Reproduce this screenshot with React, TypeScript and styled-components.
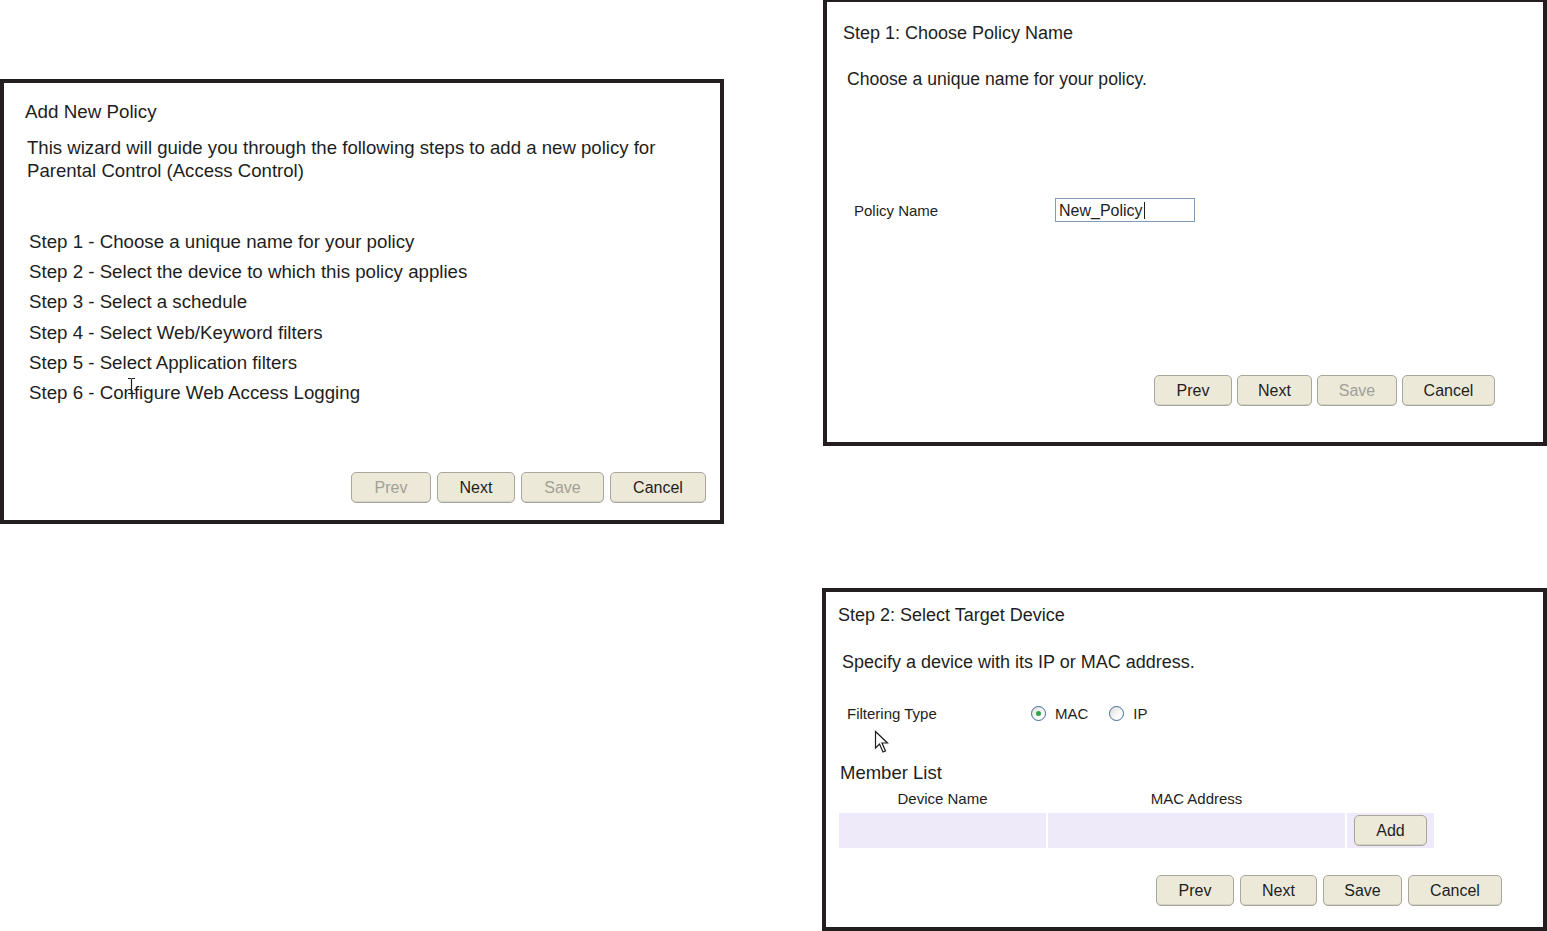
import * as React from "react";
import styled, { createGlobalStyle } from "styled-components";

const GlobalStyle = createGlobalStyle`
  html, body {
    margin: 0;
    padding: 0;
    background: #ffffff;
    overflow: hidden;
  }
  body {
    font-family: "Liberation Sans", Arial, sans-serif;
    color: #1e1e1e;
  }
`;

const Page = styled.div`
  display: grid;
  grid-template-columns: 724px 724px;
  column-gap: 99px;
  align-items: start;
  width: 1547px;
  height: 931px;
  overflow: hidden;
`;

const LeftColumn = styled.div`
  display: flex;
  flex-direction: column;
  padding-top: 79px;
`;

const RightColumn = styled.div`
  display: flex;
  flex-direction: column;
  margin-top: -2px;
`;

const Panel = styled.div<{ h: number; top?: number; shift?: number }>`
  position: relative;
  box-sizing: border-box;
  height: ${(p) => p.h}px;
  margin-top: ${(p) => p.top || 0}px;
  margin-left: ${(p) => p.shift || 0}px;
  border: 4px solid #231f20;
  background: #ffffff;
  display: flex;
  flex-direction: column;
`;

const Heading = styled.div<{ size?: number }>`
  font-size: ${(p) => p.size || 18}px;
  line-height: 22px;
  white-space: nowrap;
`;

const Text = styled.div<{ size?: number; lh?: number; indent?: number; gap?: number }>`
  font-size: ${(p) => p.size || 18}px;
  line-height: ${(p) => p.lh || 22}px;
  margin-left: ${(p) => p.indent || 0}px;
  margin-top: ${(p) => p.gap || 0}px;
  white-space: nowrap;
`;

const StepList = styled.div`
  display: flex;
  flex-direction: column;
  margin-top: 45px;
  margin-left: 4px;
`;

const StepItem = styled.div`
  font-size: 18.7px;
  line-height: 30.2px;
  white-space: nowrap;
`;

const ButtonBar = styled.div<{ gap?: number; right: number; top?: number; bottom?: number }>`
  display: flex;
  justify-content: flex-end;
  gap: ${(p) => p.gap || 5}px;
  margin-top: ${(p) => (p.top === undefined ? "auto" : `${p.top}px`)};
  padding-right: ${(p) => p.right}px;
  padding-bottom: ${(p) => p.bottom || 0}px;
`;

const WizButton = styled.button<{ w: number; off?: boolean }>`
  box-sizing: border-box;
  width: ${(p) => p.w}px;
  height: 31px;
  padding: 0;
  border: 1px solid #a8a69d;
  border-radius: 5px;
  background: #ece9d8;
  font-family: "Liberation Sans", Arial, sans-serif;
  font-size: 16px;
  color: ${(p) => (p.off ? "#a3a096" : "#1e1e1e")};
  box-shadow: inset 0 -1px 0 #d6d2c2;
`;

const FieldRow = styled.div<{ top: number; indent: number }>`
  display: flex;
  align-items: center;
  margin-top: ${(p) => p.top}px;
  margin-left: ${(p) => p.indent}px;
  height: 24px;
`;

const FieldLabel = styled.div<{ w: number }>`
  width: ${(p) => p.w}px;
  font-size: 15px;
  white-space: nowrap;
`;

const TextBox = styled.div`
  box-sizing: border-box;
  width: 140px;
  height: 24px;
  border: 1px solid #7f9db9;
  padding: 1px 0 0 3px;
  display: flex;
  align-items: center;
  font-size: 16px;
`;

const Caret = styled.span`
  display: inline-block;
  width: 1px;
  height: 17px;
  background: #1e1e1e;
  margin-left: 1px;
`;

const RadioCircle = styled.span<{ on?: boolean }>`
  position: relative;
  box-sizing: border-box;
  width: 15px;
  height: 15px;
  border-radius: 50%;
  border: 1px solid #3f6c9a;
  background: linear-gradient(135deg, #dcdcd6 0%, #ffffff 70%);
  display: inline-flex;
  align-items: center;
  justify-content: center;
  &::after {
    content: "";
    display: ${(p) => (p.on ? "block" : "none")};
    width: 5px;
    height: 5px;
    border-radius: 50%;
    background: #25a84a;
  }
`;

const RadioLabel = styled.span<{ after?: number }>`
  font-size: 15px;
  margin-left: 9px;
  margin-right: ${(p) => p.after || 0}px;
`;

const Table = styled.div`
  display: flex;
  flex-direction: column;
  margin-left: 1px;
  width: 595px;
`;

const TableRow = styled.div<{ h: number; top: number }>`
  display: grid;
  grid-template-columns: 207px 297px 87px;
  column-gap: 2px;
  height: ${(p) => p.h}px;
  margin-top: ${(p) => p.top}px;
`;

const Cell = styled.div<{ tint?: boolean }>`
  display: flex;
  align-items: center;
  justify-content: center;
  background: ${(p) => (p.tint ? "#efeaf9" : "transparent")};
  font-size: 15px;
  white-space: nowrap;
`;

const Overlay = styled.div<{ x: number; y: number }>`
  position: absolute;
  left: ${(p) => p.x}px;
  top: ${(p) => p.y}px;
  line-height: 0;
  pointer-events: none;
`;

const Content1 = styled.div`
  display: flex;
  flex-direction: column;
  padding: 18px 0 0 21px;
`;

const Content2 = styled.div`
  display: flex;
  flex-direction: column;
  padding: 20px 0 0 16px;
`;

const Content3 = styled.div`
  display: flex;
  flex-direction: column;
  padding: 12px 0 0 12px;
`;

const IBeam = () => (
  <svg width="9" height="18" viewBox="0 0 9 18">
    <path d="M1 1.5H4M5 1.5H8M4.5 1.5V16.5M1 16.5H4M5 16.5H8" stroke="#1e1e1e" strokeWidth="1.2" fill="none" />
  </svg>
);

const Arrow = () => (
  <svg width="17" height="24" viewBox="0 0 17 24">
    <path
      d="M1.5 1.5 L1.5 18 L5.5 14 L9 22 L11.5 21 L8 13 L13.5 13 Z"
      fill="#ffffff"
      stroke="#1e1e1e"
      strokeWidth="1.2"
      strokeLinejoin="miter"
    />
  </svg>
);

const steps = [
  "Step 1 - Choose a unique name for your policy",
  "Step 2 - Select the device to which this policy applies",
  "Step 3 - Select a schedule",
  "Step 4 - Select Web/Keyword filters",
  "Step 5 - Select Application filters",
  "Step 6 - Configure Web Access Logging",
];

const IntroPanel = () => (
  <Panel h={445}>
    <Content1>
      <Heading size={18.8}>Add New Policy</Heading>
      <Text size={18.6} lh={23} indent={2} gap={13}>
        This wizard will guide you through the following steps to add a new policy for
        <br />
        Parental Control (Access Control)
      </Text>
      <StepList>
        {steps.map((s) => (
          <StepItem key={s}>{s}</StepItem>
        ))}
      </StepList>
    </Content1>
    <ButtonBar gap={6} right={14} bottom={17}>
      <WizButton w={80} off>Prev</WizButton>
      <WizButton w={78}>Next</WizButton>
      <WizButton w={83} off>Save</WizButton>
      <WizButton w={96}>Cancel</WizButton>
    </ButtonBar>
    <Overlay x={123} y={294}>
      <IBeam />
    </Overlay>
  </Panel>
);

const NamePanel = () => (
  <Panel h={448}>
    <Content2>
      <Heading>Step 1: Choose Policy Name</Heading>
      <Text size={17.6} indent={4} gap={24}>
        Choose a unique name for your policy.
      </Text>
      <FieldRow top={108} indent={11}>
        <FieldLabel w={201}>Policy Name</FieldLabel>
        <TextBox>
          New_Policy
          <Caret />
        </TextBox>
      </FieldRow>
    </Content2>
    <ButtonBar right={48} top={153}>
      <WizButton w={78}>Prev</WizButton>
      <WizButton w={75}>Next</WizButton>
      <WizButton w={80} off>Save</WizButton>
      <WizButton w={93}>Cancel</WizButton>
    </ButtonBar>
  </Panel>
);

const DevicePanel = () => (
  <Panel h={343} top={142} shift={-1}>
    <Content3>
      <Heading>Step 2: Select Target Device</Heading>
      <Text indent={4} gap={25}>
        Specify a device with its IP or MAC address.
      </Text>
      <FieldRow top={28} indent={9}>
        <FieldLabel w={184}>Filtering Type</FieldLabel>
        <RadioCircle on />
        <RadioLabel after={21}>MAC</RadioLabel>
        <RadioCircle />
        <RadioLabel>IP</RadioLabel>
      </FieldRow>
      <Text size={18.5} indent={2} gap={37}>
        Member List
      </Text>
      <Table>
        <TableRow h={18} top={5}>
          <Cell>Device Name</Cell>
          <Cell>MAC Address</Cell>
          <Cell />
        </TableRow>
        <TableRow h={35} top={6}>
          <Cell tint />
          <Cell tint />
          <Cell tint>
            <WizButton w={73}>Add</WizButton>
          </Cell>
        </TableRow>
      </Table>
    </Content3>
    <ButtonBar gap={6} right={41} top={27}>
      <WizButton w={78}>Prev</WizButton>
      <WizButton w={77}>Next</WizButton>
      <WizButton w={79}>Save</WizButton>
      <WizButton w={94}>Cancel</WizButton>
    </ButtonBar>
    <Overlay x={48} y={138}>
      <Arrow />
    </Overlay>
  </Panel>
);

export default function App() {
  return (
    <>
      <GlobalStyle />
      <Page>
        <LeftColumn>
          <IntroPanel />
        </LeftColumn>
        <RightColumn>
          <NamePanel />
          <DevicePanel />
        </RightColumn>
      </Page>
    </>
  );
}
